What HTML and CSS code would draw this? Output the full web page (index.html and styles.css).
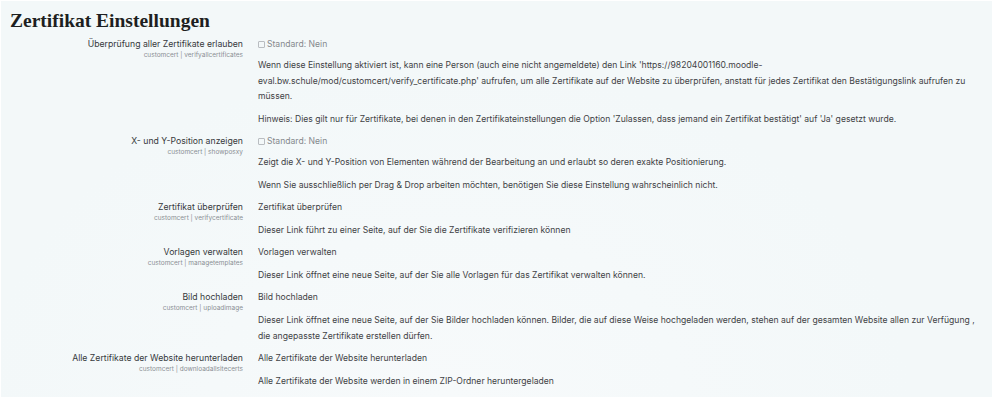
FILE: index.html
```html
<!DOCTYPE html>
<html lang="de">
<head>
  <meta charset="UTF-8">
  <meta name="viewport" content="width=device-width, initial-scale=1.0">
  <title>Zertifikat Einstellungen</title>
  <link rel="stylesheet" href="styles.css">
</head>
<body>

<div class="panel">
  <h2>Zertifikat Einstellungen</h2>

  <div class="setting">
    <div class="label">
      <div class="name">Überprüfung aller Zertifikate erlauben</div>
      <div class="key">customcert | verifyallcertificates</div>
    </div>
    <div class="value">
      <div class="default"><span class="box"></span>Standard: Nein</div>
      <p>Wenn diese Einstellung aktiviert ist, kann eine Person (auch eine nicht angemeldete) den Link 'https://98204001160.moodle-<br>eval.bw.schule/mod/customcert/verify_certificate.php' aufrufen, um alle Zertifikate auf der Website zu überprüfen, anstatt für jedes Zertifikat den Bestätigungslink aufrufen zu<br>müssen.</p>
      <p>Hinweis: Dies gilt nur für Zertifikate, bei denen in den Zertifikateinstellungen die Option 'Zulassen, dass jemand ein Zertifikat bestätigt' auf 'Ja' gesetzt wurde.</p>
    </div>
  </div>

  <div class="setting">
    <div class="label">
      <div class="name">X- und Y-Position anzeigen</div>
      <div class="key">customcert | showposxy</div>
    </div>
    <div class="value">
      <div class="default"><span class="box"></span>Standard: Nein</div>
      <p>Zeigt die X- und Y-Position von Elementen während der Bearbeitung an und erlaubt so deren exakte Positionierung.</p>
      <p>Wenn Sie ausschließlich per Drag &amp; Drop arbeiten möchten, benötigen Sie diese Einstellung wahrscheinlich nicht.</p>
    </div>
  </div>

  <div class="setting">
    <div class="label">
      <div class="name">Zertifikat überprüfen</div>
      <div class="key">customcert | verifycertificate</div>
    </div>
    <div class="value">
      <div class="link">Zertifikat überprüfen</div>
      <p>Dieser Link führt zu einer Seite, auf der Sie die Zertifikate verifizieren können</p>
    </div>
  </div>

  <div class="setting">
    <div class="label">
      <div class="name">Vorlagen verwalten</div>
      <div class="key">customcert | managetemplates</div>
    </div>
    <div class="value">
      <div class="link">Vorlagen verwalten</div>
      <p>Dieser Link öffnet eine neue Seite, auf der Sie alle Vorlagen für das Zertifikat verwalten können.</p>
    </div>
  </div>

  <div class="setting">
    <div class="label">
      <div class="name">Bild hochladen</div>
      <div class="key">customcert | uploadimage</div>
    </div>
    <div class="value">
      <div class="link">Bild hochladen</div>
      <p>Dieser Link öffnet eine neue Seite, auf der Sie Bilder hochladen können. Bilder, die auf diese Weise hochgeladen werden, stehen auf der gesamten Website allen zur Verfügung ,<br>die angepasste Zertifikate erstellen dürfen.</p>
    </div>
  </div>

  <div class="setting">
    <div class="label">
      <div class="name">Alle Zertifikate der Website herunterladen</div>
      <div class="key">customcert | downloadallsitecerts</div>
    </div>
    <div class="value">
      <div class="link">Alle Zertifikate der Website herunterladen</div>
      <p>Alle Zertifikate der Website werden in einem ZIP-Ordner heruntergeladen</p>
    </div>
  </div>
</div>

</body>
</html>
```

FILE: styles.css
```css
body {
  margin: 0;
  padding: 1px 2px 2px 1px;
  background-color: #ffffff;
  font-family: Inter, 'Noto Sans', sans-serif;
  color: #3a3d40;
}
.panel {
  height: 396px;
  box-sizing: border-box;
  overflow: hidden;
  padding: 7px 0 0 9px;
  background: radial-gradient(ellipse at 45% 100%, #f7fafb 0%, #f3f8f9 60%), #f3f8f9;
}
h2 {
  margin: 0 0 5px;
  font-family: 'Liberation Serif', serif;
  font-weight: bold;
  font-size: 19.5px;
  line-height: 25px;
  color: #1d1f21;
}
.setting {
  display: flex;
  gap: 15px;
}
.label {
  width: 233px;
  text-align: right;
}
.name {
  font-size: 8.7px;
  line-height: 13px;
  color: #36393c;
}
.key {
  font-size: 6.5px;
  line-height: 9px;
  color: #8a8f94;
}
.value {
  flex: 1;
  font-size: 8.6px;
  line-height: 15.5px;
  color: #3f4245;
}
.default {
  color: #85898d;
  line-height: 13px;
  margin-bottom: 7px;
  display: flex;
  align-items: center;
}
.box {
  width: 5px;
  height: 5px;
  border: 1px solid #b9bdc1;
  border-radius: 1px;
  margin-right: 2px;
}
.link {
  line-height: 13px;
  margin-bottom: 9px;
}
.value p {
  margin: 0 0 7.5px;
}
```
